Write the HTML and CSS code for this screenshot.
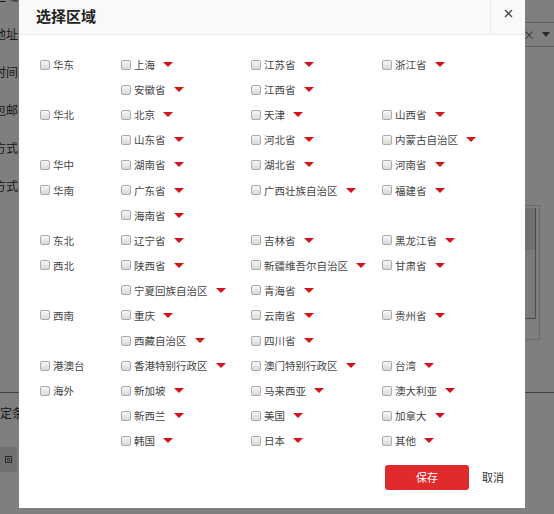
FILE: index.html
```html
<!DOCTYPE html>
<html lang="zh-CN">
<head>
<meta charset="utf-8">
<title>选择区域</title>
<link rel="stylesheet" href="styles.css">
</head>
<body>
<div class="page">
  <div class="form">
    <div class="frow"><span class="flabel">所在区域</span></div>
    <div class="frow"><span class="flabel">发货地址</span>
      <div class="fctl"><div class="select"><span class="sel-x">×</span><span class="sel-caret"></span></div></div>
    </div>
    <div class="frow"><span class="flabel">发货时间</span></div>
    <div class="frow"><span class="flabel">是否包邮</span></div>
    <div class="frow"><span class="flabel">计价方式</span></div>
    <div class="frow"><span class="flabel">运送方式</span></div>
    <div class="frow tall">
      <div class="fctl"><div class="listbox"><div class="listbox-inner"><div class="listbox-sel"></div></div></div></div>
    </div>
    <div class="divider"></div>
    <div class="frow"><span class="flabel wide">指定条件</span></div>
    <div class="frow short"><div class="toolbox"><span class="toolicon"></span></div></div>
  </div>
  <div class="overlay"></div>

  <div class="modal">
    <div class="modal-head">
      <h1 class="modal-title">选择区域</h1>
      <div class="modal-close">
        <svg width="9" height="9" viewBox="0 0 9 9"><path d="M1 1 L8 8 M8 1 L1 8" stroke="#444" stroke-width="1.3" fill="none"/></svg>
      </div>
    </div>
    <div class="modal-body">
      <div class="group">
        <label class="item region"><span class="cb"></span>华东</label>
        <div class="provs">
          <label class="item"><span class="cb"></span>上海<span class="tri"></span></label>
          <label class="item"><span class="cb"></span>江苏省<span class="tri"></span></label>
          <label class="item"><span class="cb"></span>浙江省<span class="tri"></span></label>
          <label class="item"><span class="cb"></span>安徽省<span class="tri"></span></label>
          <label class="item"><span class="cb"></span>江西省<span class="tri"></span></label>
        </div>
      </div>
      <div class="group">
        <label class="item region"><span class="cb"></span>华北</label>
        <div class="provs">
          <label class="item"><span class="cb"></span>北京<span class="tri"></span></label>
          <label class="item"><span class="cb"></span>天津<span class="tri"></span></label>
          <label class="item"><span class="cb"></span>山西省<span class="tri"></span></label>
          <label class="item"><span class="cb"></span>山东省<span class="tri"></span></label>
          <label class="item"><span class="cb"></span>河北省<span class="tri"></span></label>
          <label class="item"><span class="cb"></span>内蒙古自治区<span class="tri"></span></label>
        </div>
      </div>
      <div class="group">
        <label class="item region"><span class="cb"></span>华中</label>
        <div class="provs">
          <label class="item"><span class="cb"></span>湖南省<span class="tri"></span></label>
          <label class="item"><span class="cb"></span>湖北省<span class="tri"></span></label>
          <label class="item"><span class="cb"></span>河南省<span class="tri"></span></label>
        </div>
      </div>
      <div class="group">
        <label class="item region"><span class="cb"></span>华南</label>
        <div class="provs">
          <label class="item"><span class="cb"></span>广东省<span class="tri"></span></label>
          <label class="item"><span class="cb"></span>广西壮族自治区<span class="tri"></span></label>
          <label class="item"><span class="cb"></span>福建省<span class="tri"></span></label>
          <label class="item"><span class="cb"></span>海南省<span class="tri"></span></label>
        </div>
      </div>
      <div class="group">
        <label class="item region"><span class="cb"></span>东北</label>
        <div class="provs">
          <label class="item"><span class="cb"></span>辽宁省<span class="tri"></span></label>
          <label class="item"><span class="cb"></span>吉林省<span class="tri"></span></label>
          <label class="item"><span class="cb"></span>黑龙江省<span class="tri"></span></label>
        </div>
      </div>
      <div class="group">
        <label class="item region"><span class="cb"></span>西北</label>
        <div class="provs">
          <label class="item"><span class="cb"></span>陕西省<span class="tri"></span></label>
          <label class="item"><span class="cb"></span>新疆维吾尔自治区<span class="tri"></span></label>
          <label class="item"><span class="cb"></span>甘肃省<span class="tri"></span></label>
          <label class="item"><span class="cb"></span>宁夏回族自治区<span class="tri"></span></label>
          <label class="item"><span class="cb"></span>青海省<span class="tri"></span></label>
        </div>
      </div>
      <div class="group">
        <label class="item region"><span class="cb"></span>西南</label>
        <div class="provs">
          <label class="item"><span class="cb"></span>重庆<span class="tri"></span></label>
          <label class="item"><span class="cb"></span>云南省<span class="tri"></span></label>
          <label class="item"><span class="cb"></span>贵州省<span class="tri"></span></label>
          <label class="item"><span class="cb"></span>西藏自治区<span class="tri"></span></label>
          <label class="item"><span class="cb"></span>四川省<span class="tri"></span></label>
        </div>
      </div>
      <div class="group">
        <label class="item region"><span class="cb"></span>港澳台</label>
        <div class="provs">
          <label class="item"><span class="cb"></span>香港特别行政区<span class="tri"></span></label>
          <label class="item"><span class="cb"></span>澳门特别行政区<span class="tri"></span></label>
          <label class="item"><span class="cb"></span>台湾<span class="tri"></span></label>
        </div>
      </div>
      <div class="group">
        <label class="item region"><span class="cb"></span>海外</label>
        <div class="provs">
          <label class="item"><span class="cb"></span>新加坡<span class="tri"></span></label>
          <label class="item"><span class="cb"></span>马来西亚<span class="tri"></span></label>
          <label class="item"><span class="cb"></span>澳大利亚<span class="tri"></span></label>
          <label class="item"><span class="cb"></span>新西兰<span class="tri"></span></label>
          <label class="item"><span class="cb"></span>美国<span class="tri"></span></label>
          <label class="item"><span class="cb"></span>加拿大<span class="tri"></span></label>
          <label class="item"><span class="cb"></span>韩国<span class="tri"></span></label>
          <label class="item"><span class="cb"></span>日本<span class="tri"></span></label>
          <label class="item"><span class="cb"></span>其他<span class="tri"></span></label>
        </div>
      </div>
    </div>
    <div class="modal-foot">
      <button class="btn-save" type="button">保存</button>
      <a class="btn-cancel">取消</a>
    </div>
  </div>
</div>
</body>
</html>
```

FILE: styles.css
```css
html, body {
  margin: 0;
  padding: 0;
}
body {
  width: 554px;
  height: 514px;
  overflow: hidden;
  font-family: "Noto Sans CJK SC", "Noto Sans", sans-serif;
  color: #333;
}
.page {
  position: relative;
  width: 554px;
  height: 514px;
  overflow: hidden;
  background: #fff;
}
.form {
  margin-top: -24px;
  font-size: 12px;
}
.frow {
  display: flex;
  align-items: center;
  height: 38px;
}
.frow.tall {
  height: 136px;
  align-items: flex-start;
}
.frow.short {
  height: 25px;
  margin-top: 16px;
}
.flabel {
  width: 18px;
  flex: none;
  display: flex;
  justify-content: flex-end;
  overflow: hidden;
  white-space: nowrap;
  color: #333;
}
.flabel.wide {
  width: 36px;
}
.fctl {
  flex: 1;
  display: flex;
  justify-content: flex-end;
}
.select {
  margin-top: 3px;
  width: 420px;
  height: 25px;
  box-sizing: border-box;
  border-top: 1px solid #bbb;
  border-bottom: 1px solid #bbb;
  display: flex;
  align-items: center;
  justify-content: flex-end;
  gap: 7px;
  padding-right: 4px;
  font-size: 12px;
  color: #666;
}
.sel-x {
  line-height: 1;
}
.sel-caret {
  width: 0;
  height: 0;
  border-left: 4px solid transparent;
  border-right: 4px solid transparent;
  border-top: 5px solid #555;
}
.listbox {
  margin-top: 1px;
  margin-right: 14px;
  width: 300px;
  height: 135px;
  box-sizing: border-box;
  border: 1px solid #d6d6d6;
  padding: 2px 3px 0 0;
}
.listbox-inner {
  height: 110px;
  border-right: 1px solid #9a9a9a;
  border-bottom: 1px solid #9a9a9a;
  background: #f4f4f4;
}
.listbox-sel {
  height: 42px;
  background: #dfe3ea;
}
.divider {
  height: 0;
  border-top: 1px solid #888;
  margin-top: 52px;
}
.toolbox {
  width: 17px;
  height: 25px;
  background: #e0e0e0;
  display: flex;
  align-items: center;
  justify-content: center;
}
.toolicon {
  width: 7px;
  height: 7px;
  border: 1px solid #555;
  box-sizing: border-box;
  box-shadow: inset 0 0 0 1px #e0e0e0, inset 0 0 0 2px #777;
}
.overlay {
  position: absolute;
  inset: 0;
  background: rgba(0, 0, 0, 0.5);
}

/* modal */
.modal {
  position: absolute;
  left: 19px;
  top: 0;
  width: 506px;
  height: 508px;
  background: #fff;
  display: flex;
  flex-direction: column;
}
.modal-head {
  height: 35px;
  box-sizing: border-box;
  border-bottom: 1px solid #ececec;
  background: #f9f9f9;
  display: flex;
  align-items: stretch;
}
.modal-title {
  flex: 1;
  margin: 0;
  padding-left: 17px;
  font-size: 15px;
  font-weight: bold;
  color: #222;
  line-height: 31px;
}
.modal-close {
  width: 35px;
  border-left: 1px solid #ececec;
  display: flex;
  justify-content: center;
  align-items: flex-start;
  padding-top: 9px;
  box-sizing: border-box;
}
.modal-body {
  padding: 17px 0 0 21px;
  font-size: 10.5px;
  color: #444;
}
.group {
  display: flex;
  align-items: flex-start;
}
.item {
  display: flex;
  align-items: center;
  height: 25.1px;
  white-space: nowrap;
}
.region {
  width: 81px;
  flex: none;
}
.provs {
  display: grid;
  grid-template-columns: 130px 131px 130px;
  grid-auto-rows: 25.1px;
}
.cb {
  width: 10px;
  height: 10px;
  box-sizing: border-box;
  border: 1px solid #aaa;
  border-radius: 2px;
  background: linear-gradient(#f6f6f6, #d9d9d9);
  margin-right: 3px;
  flex: none;
}
.tri {
  width: 0;
  height: 0;
  margin-left: 8px;
  border-left: 5px solid transparent;
  border-right: 5px solid transparent;
  border-top: 5px solid #d4121d;
}
.modal-foot {
  display: flex;
  justify-content: flex-end;
  align-items: center;
  margin-top: 11px;
  padding-right: 21px;
}
.btn-save {
  width: 84px;
  height: 25px;
  border: none;
  border-radius: 3px;
  background: #e02a2b;
  color: #fff;
  font-family: "Noto Sans CJK SC", sans-serif;
  font-size: 11px;
  padding: 0;
}
.btn-cancel {
  margin-left: 13px;
  font-size: 11px;
  color: #333;
}
```
